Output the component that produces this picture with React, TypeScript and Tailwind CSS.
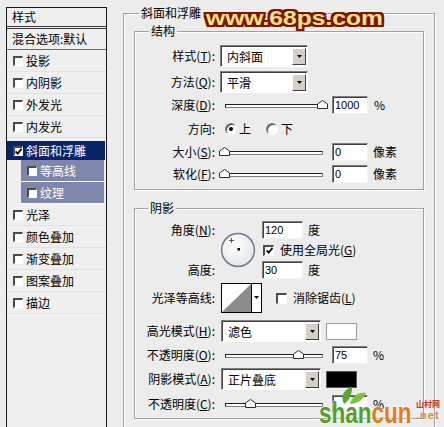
import type { ReactNode } from 'react'

const UI = "font-['Noto_Sans_CJK_SC','Liberation_Sans',sans-serif]"

interface ListItem {
  label: string
  selected?: boolean
  sub?: boolean
}

const LIST: ListItem[] = [
  { label: '投影' },
  { label: '内阴影' },
  { label: '外发光' },
  { label: '内发光' },
  { label: '斜面和浮雕', selected: true },
  { label: '等高线', sub: true },
  { label: '纹理', sub: true },
  { label: '光泽' },
  { label: '颜色叠加' },
  { label: '渐变叠加' },
  { label: '图案叠加' },
  { label: '描边' },
]

function Check({ on = false, size = 'h-[11px] w-[11px]' }: { on?: boolean; size?: string }) {
  return (
    <span
      className={`inline-flex ${size} shrink-0 items-center justify-center border-t-2 border-l-2 border-r border-b border-t-[#4a4a4a] border-l-[#4a4a4a] border-r-white border-b-white bg-white`}
    >
      {on && (
        <svg width="7" height="7" viewBox="0 0 7 7">
          <path d="M0.6 3.4 L2.6 5.6 L6.6 0.8" fill="none" stroke="#000" strokeWidth="1.7" />
        </svg>
      )}
    </span>
  )
}

function Radio({ on = false }: { on?: boolean }) {
  return (
    <span className="inline-flex h-[12px] w-[12px] shrink-0 items-center justify-center rounded-full border border-t-[#808080] border-l-[#808080] border-r-white border-b-white bg-white shadow-[inset_1px_1px_0_#404040]">
      {on && <span className="h-[4px] w-[4px] rounded-full bg-black" />}
    </span>
  )
}

function Tri() {
  return (
    <svg width="5" height="3" viewBox="0 0 5 3">
      <path d="M0 0h5L2.5 3z" fill="#000" />
    </svg>
  )
}

function Select({ value, className }: { value: string; className: string }) {
  return (
    <div
      className={`flex h-[22px] border-t border-l border-r border-b border-t-[#808080] border-l-[#808080] border-r-white border-b-white ${className}`}
    >
      <div className="flex flex-1 border-t border-l border-t-[#404040] border-l-[#404040] bg-white">
        <span className="flex flex-1 items-center pl-[5px]">{value}</span>
        <span className="m-[1px] flex w-[14px] items-center justify-center border border-t-white border-l-white border-r-[#404040] border-b-[#404040] bg-[#d4d0c8]">
          <Tri />
        </span>
      </div>
    </div>
  )
}

function Field({ value, className }: { value: string; className: string }) {
  return (
    <div
      className={`flex h-[18px] items-center border border-t-[#808080] border-l-[#808080] border-r-[#f4f4f4] border-b-[#f4f4f4] bg-white pl-[2px] font-['Liberation_Sans',sans-serif] text-[11px] shadow-[inset_1px_1px_0_#404040] ${className}`}
    >
      {value}
    </div>
  )
}

function Slider({ at, className }: { at: number; className: string }) {
  return (
    <div className={`relative h-[12px] w-[98px] shrink-0 ${className}`}>
      <div className="absolute inset-x-0 top-[5px] h-[4px] border border-t-[#202020] border-l-[#202020] border-r-[#808080] border-b-[#808080] bg-white" />
      <svg className="absolute top-[1px]" style={{ left: at - 5 }} width="11" height="9" viewBox="0 0 11 9">
        <path d="M5.5 0.5 L10.5 4 L10.5 8.5 L0.5 8.5 L0.5 4 Z" fill="#fff" stroke="#2a2a2a" />
      </svg>
    </div>
  )
}

function Group({
  title,
  titleLeft,
  className,
  children,
}: {
  title: string
  titleLeft: string
  className: string
  children?: ReactNode
}) {
  return (
    <div className={`relative border border-[#a0a0a0] shadow-[1px_1px_0_#fff,inset_1px_1px_0_#fff] ${className}`}>
      <span className={`absolute top-[-9px] ${titleLeft} bg-[#ececec] px-[2px] leading-[16px]`}>{title}</span>
      {children}
    </div>
  )
}

function Row({ label, className, children }: { label: ReactNode; className: string; children?: ReactNode }) {
  return (
    <div className={`flex items-center ${className}`}>
      <span className="w-[80px] shrink-0 whitespace-nowrap text-right">{label}</span>
      {children}
    </div>
  )
}

function Dial() {
  return (
    <svg className="ml-[5px] mt-[12px] shrink-0" width="36" height="36" viewBox="0 0 36 36">
      <defs>
        <radialGradient id="dialFill" cx="40%" cy="35%" r="70%">
          <stop offset="0" stopColor="#ffffff" />
          <stop offset="1" stopColor="#e2e4e8" />
        </radialGradient>
      </defs>
      <circle cx="18" cy="18" r="16.4" fill="url(#dialFill)" stroke="#6d788a" strokeWidth="1.5" />
      <rect x="17.5" y="16" width="2.5" height="2.5" fill="#000" />
      <path d="M9 8.5h5M11.5 6v5" stroke="#555" strokeWidth="1" />
    </svg>
  )
}

function Contour() {
  return (
    <svg className="ml-[6px] shrink-0" width="41" height="30" viewBox="0 0 41 30">
      <rect x="0.5" y="0.5" width="40" height="29" fill="#fff" stroke="#000" />
      <polygon points="1,29 30,1 30,29" fill="#8c8c8c" />
      <line x1="30.5" y1="0" x2="30.5" y2="30" stroke="#000" />
      <polygon points="33,13 38,13 35.5,16" fill="#000" />
    </svg>
  )
}

function LayerList() {
  return (
    <div className="ml-[6px] mt-[7px] h-[440px] w-[101px] shrink-0 border border-[#1a1a1a] bg-[#efefef]">
      <div className="flex h-[21px] items-center border-b-[3px] border-double border-b-[#3a3a3a] pl-[5px]">样式</div>
      <div className="flex h-[21px] items-center border-b border-b-[#6a6a6a] pl-[5px]">混合选项:默认</div>
      {LIST.map((item) => {
        if (item.selected) {
          return (
            <div key={item.label} className="h-[22px] pt-[3px] pr-[1px]">
              <div className="flex h-[19px] items-center gap-[3px] bg-[#0a246a] pl-[6px] text-white">
                <Check on size="h-[10px] w-[10px]" />
                {item.label}
              </div>
            </div>
          )
        }
        if (item.sub) {
          return (
            <div key={item.label} className="h-[22px] pl-[14px] pr-[2px]">
              <div className="flex h-full items-center gap-[3px] border-b border-b-white bg-[#7d86ab] pl-[6px] text-white">
                <Check size="h-[10px] w-[10px]" />
                {item.label}
              </div>
            </div>
          )
        }
        return (
          <div key={item.label} className="flex h-[22px] items-center gap-[3px] border-b border-b-[#e2e2e2] pl-[6px]">
            <Check size="h-[10px] w-[10px]" />
            {item.label}
          </div>
        )
      })}
    </div>
  )
}

export default function App() {
  return (
    <div className={`relative flex h-[427px] w-[444px] overflow-hidden bg-[#ececec] text-[12px] leading-[16px] text-black ${UI}`}>
      <LayerList />

      <Group title="斜面和浮雕" titleLeft="left-[15px]" className="ml-[16px] mt-[13px] h-[440px] w-[312px] shrink-0">
        <Group title="结构" titleLeft="left-[14px]" className="ml-[10px] mt-[17px] h-[159px] w-[290px] pt-[13px]">
          <Row className="h-[22px]" label={<>样式(<u>T</u>):</>}>
            <Select className="ml-[5px] w-[88px]" value="内斜面" />
          </Row>
          <Row className="mt-[4px] h-[22px]" label={<>方法(<u>Q</u>):</>}>
            <Select className="ml-[5px] w-[88px]" value="平滑" />
          </Row>
          <Row className="mt-[1px] h-[22px]" label={<>深度(<u>D</u>):</>}>
            <Slider className="ml-[10px]" at={97} />
            <Field className="ml-[9px] w-[36px]" value="1000" />
            <span className="ml-[6px]">%</span>
          </Row>
          <Row className="mt-[2px] h-[22px]" label="方向:">
            <span className="ml-[10px] flex items-center">
              <Radio on />
            </span>
            <span className="ml-[2px]">上</span>
            <span className="ml-[15px] flex items-center">
              <Radio />
            </span>
            <span className="ml-[3px]">下</span>
          </Row>
          <Row className="mt-[1px] h-[22px]" label={<>大小(<u>S</u>):</>}>
            <Slider className="ml-[10px]" at={-1} />
            <Field className="ml-[9px] w-[36px]" value="0" />
            <span className="ml-[5px]">像素</span>
          </Row>
          <Row className="h-[22px]" label={<>软化(<u>F</u>):</>}>
            <Slider className="ml-[10px]" at={-1} />
            <Field className="ml-[9px] w-[36px]" value="0" />
            <span className="ml-[5px]">像素</span>
          </Row>
        </Group>

        <Group title="阴影" titleLeft="left-[13px]" className="ml-[10px] mt-[18px] h-[211px] w-[290px] pt-[11px]">
          <div className="flex h-[60px]">
            <div className="flex w-[80px] shrink-0 flex-col justify-between">
              <span className="flex h-[20px] items-center justify-end">角度(<u>N</u>):</span>
              <span className="flex h-[20px] items-center justify-end">高度:</span>
            </div>
            <Dial />
            <div className="ml-[6px] flex flex-col">
              <div className="flex h-[20px] items-center">
                <Field className="w-[41px]" value="120" />
                <span className="ml-[5px]">度</span>
              </div>
              <div className="flex h-[20px] items-center pl-[1px]">
                <Check on />
                <span className="ml-[6px]">使用全局光(<u>G</u>)</span>
              </div>
              <div className="flex h-[20px] items-center">
                <Field className="w-[41px]" value="30" />
                <span className="ml-[5px]">度</span>
              </div>
            </div>
          </div>

          <Row className="mt-[3px] h-[30px]" label="光泽等高线:">
            <Contour />
            <span className="ml-[14px] flex items-center">
              <Check />
            </span>
            <span className="ml-[6px]">消除锯齿(<u>L</u>)</span>
          </Row>
          <Row className="mt-[7px] h-[22px]" label={<>高光模式(<u>H</u>):</>}>
            <Select className="ml-[6px] w-[100px]" value="滤色" />
            <span className="ml-[5px] h-[17px] w-[31px] border border-[#9a9a9a] bg-white" />
          </Row>
          <Row className="mt-[4px] h-[18px]" label={<>不透明度(<u>O</u>):</>}>
            <Slider className="ml-[10px]" at={73} />
            <Field className="ml-[9px] w-[36px]" value="75" />
            <span className="ml-[5px]">%</span>
          </Row>
          <Row className="mt-[4px] h-[22px]" label={<>阴影模式(<u>A</u>):</>}>
            <Select className="ml-[6px] w-[100px]" value="正片叠底" />
            <span className="ml-[5px] h-[17px] w-[31px] border border-[#5a5a5a] bg-black" />
          </Row>
          <Row className="mt-[5px] h-[18px]" label={<>不透明度(<u>C</u>):</>}>
            <Slider className="ml-[10px]" at={25} />
            <Field className="ml-[9px] w-[36px]" value="" />
            <span className="ml-[5px]">%</span>
          </Row>
        </Group>
      </Group>

      {/* site watermark, top */}
      <span className="absolute left-[206px] top-[8px] inline-block origin-left scale-x-[1.23] font-['Liberation_Sans',sans-serif] text-[20px] font-bold leading-none text-[#ffe08a] [text-shadow:2px_0_0_#7a1600,-2px_0_0_#7a1600,0_2px_0_#7a1600,0_-2px_0_#7a1600,2px_2px_0_#7a1600,-2px_-2px_0_#7a1600,2px_-2px_0_#7a1600,-2px_2px_0_#7a1600]">
        www.68ps.com
      </span>

      {/* site watermark, bottom right */}
      <svg className="absolute left-[338px] top-[384px]" width="30" height="22" viewBox="0 0 30 22">
        <path d="M6 20 C2 12 6 5 14 3 C14 11 11 17 6 20 Z" fill="#5aa62c" />
        <path d="M12 20 C14 12 20 8 28 9 C25 16 19 20 12 20 Z" fill="#7cc23c" />
      </svg>
      <span className="absolute left-[319px] top-[398px] inline-block origin-left scale-x-[0.75] font-['Liberation_Sans',sans-serif] text-[30px] font-bold leading-none [text-shadow:0_0_2px_#fff,0_0_2px_#fff]">
        <span className="text-[#52a02a]">shan</span>
        <span className="text-[#e27c14]">cun</span>
      </span>
      <span className="absolute left-[416px] top-[400px] text-[8px] font-bold leading-none text-[#c03a2a]">山村网</span>
      <span className="absolute left-[416px] top-[410px] font-['Liberation_Sans',sans-serif] text-[11px] font-bold leading-none tracking-[1px] text-[#d88a40]">
        .net
      </span>
    </div>
  )
}
